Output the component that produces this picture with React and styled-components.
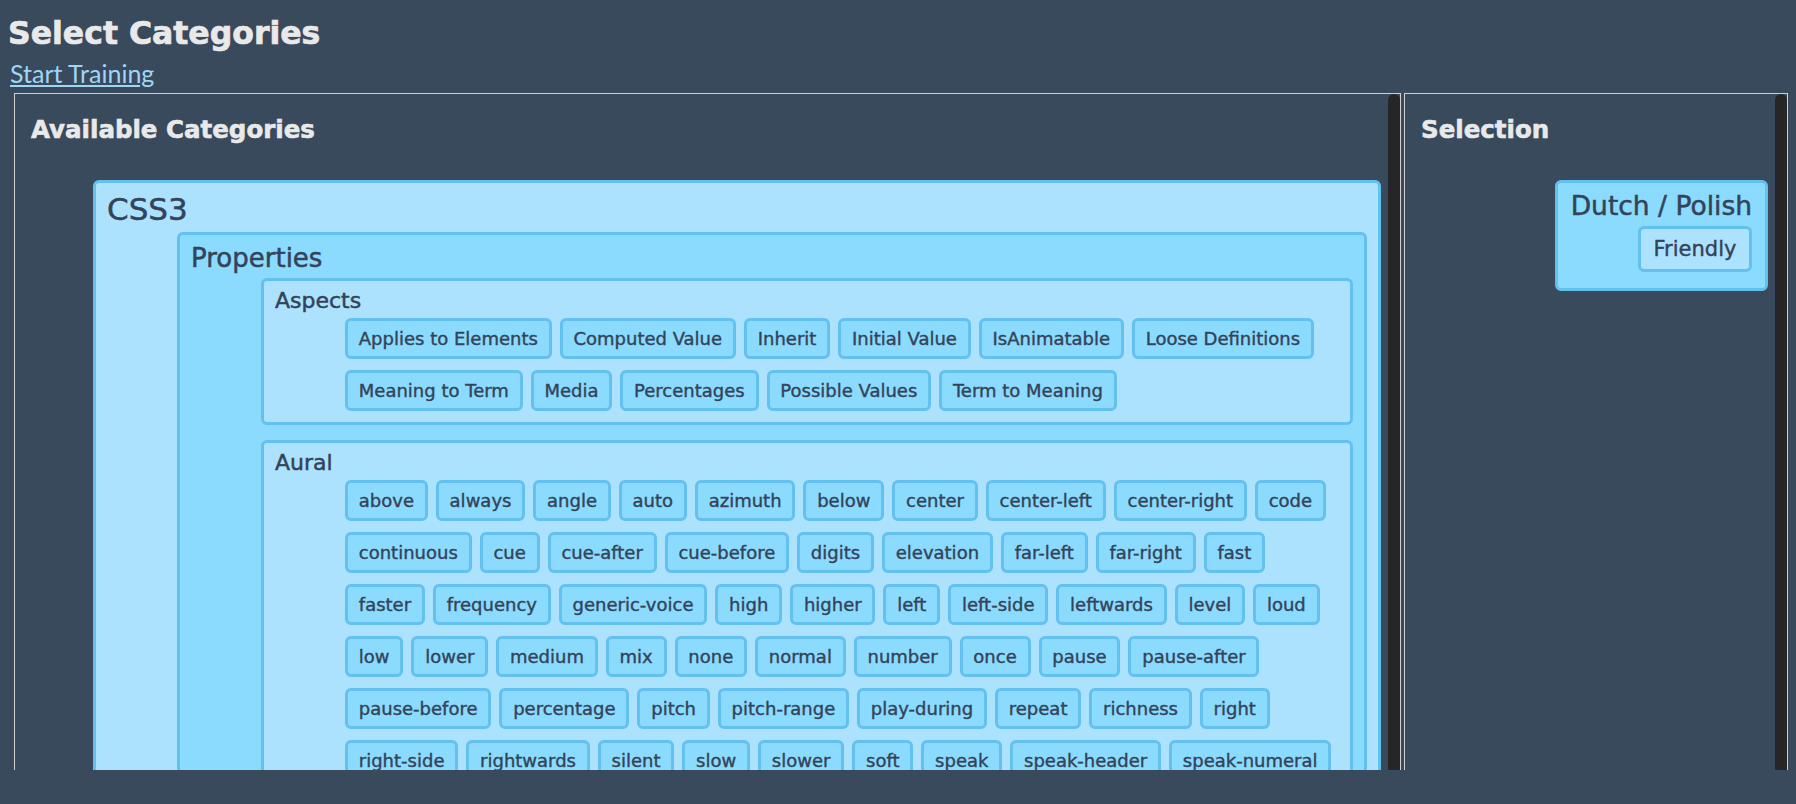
import React from 'react'
import styled, {createGlobalStyle} from 'styled-components'

const aspects = [
    'Applies to Elements', 'Computed Value', 'Inherit', 'Initial Value', 'IsAnimatable', 'Loose Definitions',
    'Meaning to Term', 'Media', 'Percentages', 'Possible Values', 'Term to Meaning'
]

const aural = [
    'above', 'always', 'angle', 'auto', 'azimuth', 'below', 'center', 'center-left', 'center-right', 'code',
    'continuous', 'cue', 'cue-after', 'cue-before', 'digits', 'elevation', 'far-left', 'far-right', 'fast',
    'faster', 'frequency', 'generic-voice', 'high', 'higher', 'left', 'left-side', 'leftwards', 'level', 'loud',
    'low', 'lower', 'medium', 'mix', 'none', 'normal', 'number', 'once', 'pause', 'pause-after',
    'pause-before', 'percentage', 'pitch', 'pitch-range', 'play-during', 'repeat', 'richness', 'right',
    'right-side', 'rightwards', 'silent', 'slow', 'slower', 'soft', 'speak', 'speak-header', 'speak-numeral',
    'speak-punctuation', 'speech-rate', 'spell-out', 'stress', 'voice-family', 'volume', 'x-fast', 'x-high',
    'x-loud', 'x-low', 'x-slow', 'x-soft'
]

const background = [
    'attachment', 'background-clip', 'background-color', 'background-image', 'background-origin',
    'background-position', 'background-repeat', 'background-size', 'border-box', 'contain', 'cover'
]

const tree = {
    name: 'CSS3',
    children: [{
        name: 'Properties',
        children: [
            {name: 'Aspects', items: aspects},
            {name: 'Aural', items: aural},
            {name: 'Background', items: background},
        ]
    }]
}

// header size / line height per depth of the tree
const levels = [
    {size: 31, line: 40},
    {size: 26, line: 34},
    {size: 22, line: 28},
]

function Category({node, depth}) {
    const tone = depth % 2 === 0 ? 'light' : 'medium'
    const level = levels[Math.min(depth, levels.length - 1)]
    return (
        <Box $tone={tone}>
            <BoxTitle $size={level.size} $line={level.line}>{node.name}</BoxTitle>
            {node.children &&
            <SubList>
                {node.children.map(child => <Category key={child.name} node={child} depth={depth + 1}/>)}
            </SubList>}
            {node.items &&
            <Chips>
                {node.items.map(item => <Chip key={item} type="button" $tone={tone}>{item}</Chip>)}
            </Chips>}
        </Box>
    )
}

function App() {
    return (
        <>
            <GlobalStyle/>
            <Title>Select Categories</Title>
            <LinkRow><TrainLink href="#">Start Training</TrainLink></LinkRow>
            <Board>
                <Panel>
                    <PanelBody>
                        <PanelTitle>Available Categories</PanelTitle>
                        <Tree>
                            <Category node={tree} depth={0}/>
                        </Tree>
                    </PanelBody>
                    <ScrollTrack/>
                </Panel>
                <Panel>
                    <PanelBody>
                        <PanelTitle>Selection</PanelTitle>
                        <SelectionList>
                            <Box $tone="medium" $align="right" $pb={16} $px={13}>
                                <BoxTitle $size={26.5} $line={34}>Dutch / Polish</BoxTitle>
                                <Chips $right>
                                    <Chip type="button" $tone="medium" $size={21} $line={28}>Friendly</Chip>
                                </Chips>
                            </Box>
                        </SelectionList>
                    </PanelBody>
                    <ScrollTrack/>
                </Panel>
            </Board>
        </>
    )
}

const GlobalStyle = createGlobalStyle`
  html, body {
    margin: 0;
    height: 100%;
  }

  body {
    padding: 0 8px;
    background: #384a5b;
    overflow: hidden;
    font-family: 'Lato', 'Liberation Sans', sans-serif;
  }
`

const Title = styled.h1`
  margin: 12px 0 0;
  font-family: 'DejaVu Sans', 'Liberation Sans', sans-serif;
  font-size: 31.5px;
  line-height: 42px;
  font-weight: 700;
  color: #e9e9e9;
  -webkit-text-stroke: 0.7px currentColor;
`

const LinkRow = styled.div`
  font-size: 25px;
  line-height: 39px;
  padding-left: 2px;
`

const TrainLink = styled.a`
  color: #9dd6f7;
  text-decoration: underline;
`

const Board = styled.div`
  display: grid;
  grid-template-columns: 1387px 384px;
  column-gap: 3px;
  padding-left: 6px;
  height: 677px;
`

const Panel = styled.section`
  display: flex;
  min-height: 0;
  border: 1px solid #cfcfcf;
  border-bottom: 0;
`

const PanelBody = styled.div`
  flex: 1;
  min-width: 0;
  padding: 18px 7px 0 16px;
  overflow: hidden;
`

const ScrollTrack = styled.div`
  flex: 0 0 12px;
  background: #262626;
  border-radius: 6px 6px 0 0;
`

const PanelTitle = styled.h2`
  margin: 0 0 33px;
  font-family: 'DejaVu Sans', 'Liberation Sans', sans-serif;
  font-size: 24.5px;
  line-height: 35px;
  font-weight: 700;
  color: #e9e9e9;
  -webkit-text-stroke: 0.6px currentColor;
`

const Tree = styled.div`
  margin-left: 62px;
  display: flex;
  flex-direction: column;
  gap: 15px;
`

const SelectionList = styled.div`
  display: flex;
  flex-direction: column;
  align-items: flex-end;
`

const Box = styled.div`
  display: flex;
  flex-direction: column;
  gap: 3px;
  padding: 6px ${p => p.$px ?? 11}px ${p => p.$pb ?? 11}px;
  border: 3px solid #63c1ef;
  border-radius: 6px;
  background: ${p => p.$tone === 'light' ? '#ade2fe' : '#8bdbfe'};
  text-align: ${p => p.$align ?? 'left'};
  font-family: 'DejaVu Sans', 'Liberation Sans', sans-serif;
  color: #33435a;
`

const BoxTitle = styled.div`
  font-size: ${p => p.$size}px;
  line-height: ${p => p.$line}px;
  -webkit-text-stroke: 0.5px currentColor;
`

const SubList = styled.div`
  margin-left: 70px;
  display: flex;
  flex-direction: column;
  gap: 15px;
`

const Chips = styled.div`
  display: flex;
  flex-wrap: wrap;
  justify-content: ${p => p.$right ? 'flex-end' : 'flex-start'};
  column-gap: 8px;
  row-gap: 11px;
  margin-left: ${p => p.$right ? 0 : 70}px;
`

const Chip = styled.button`
  padding: 6px 0.6em;
  border: 3px solid #63c1ef;
  border-radius: 6px;
  background: ${p => p.$tone === 'light' ? '#8bdbfe' : '#ade2fe'};
  font-family: 'DejaVu Sans', 'Liberation Sans', sans-serif;
  font-size: ${p => p.$size ?? 18}px;
  line-height: ${p => p.$line ?? 23}px;
  color: #33435a;
  -webkit-text-stroke: 0.4px currentColor;
  cursor: pointer;
  white-space: nowrap;
`

export default App
